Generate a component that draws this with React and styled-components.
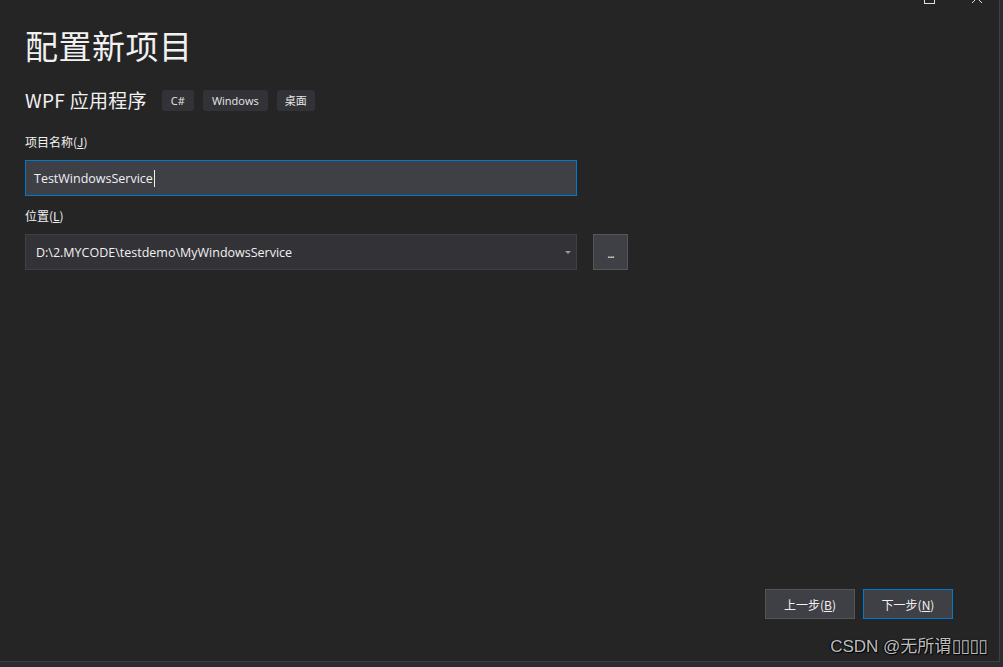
import React from 'react';
import styled, { createGlobalStyle } from 'styled-components';

const GlobalStyle = createGlobalStyle`
    html, body {
        margin: 0;
        padding: 0;
        background: #2d2d30;
    }
    body {
        font-family: "Noto Sans CJK SC", "Liberation Sans", sans-serif;
        color: #f1f1f1;
    }
`;

const Screen = styled.div`
    width: 1003px;
    height: 667px;
    overflow: hidden;
    background: #2d2d30;
`;

const Dialog = styled.div`
    position: relative;
    width: 1000px;
    height: 662px;
    box-sizing: border-box;
    background: #252526;
    border-right: 1px solid #3f3f46;
    border-bottom: 1px solid #3f3f46;
    padding: 23px 0 0 25px;
    display: flex;
    flex-direction: column;
`;

const WindowControls = styled.div`
    position: absolute;
    top: -8px;
    right: 16px;
    display: flex;
    gap: 36px;
    align-items: center;
`;

const Title = styled.h1`
    margin: 0;
    font-size: 33px;
    font-weight: 400;
    line-height: 44px;
    letter-spacing: 0.5px;
`;

const SubRow = styled.div`
    display: flex;
    align-items: center;
    margin-top: 22px;
    height: 22px;
`;

const SubTitle = styled.span`
    font-size: 19px;
    line-height: 22px;
    margin-right: 15px;
    letter-spacing: 0.3px;
`;

const Tag = styled.span`
    display: inline-flex;
    align-items: center;
    height: 21px;
    padding: 0 ${p => p.pad || 9}px;
    margin-right: 9px;
    background: #333337;
    border-radius: 3px;
    font-family: "Open Sans", "Noto Sans CJK SC", sans-serif;
    font-size: 11px;
    color: #e8e8e8;
`;

const Label = styled.div`
    margin-top: ${p => p.top}px;
    font-size: 12px;
    line-height: 16px;
    color: #f1f1f1;
    u { text-decoration: underline; }
`;

const Field = styled.div`
    margin-top: 10px;
    display: flex;
    gap: 16px;
    align-items: center;
`;

const TextInput = styled.div`
    width: 552px;
    height: 36px;
    box-sizing: border-box;
    background: #3f3f46;
    border: 1px solid #007acc;
    padding: 0 8px;
    display: flex;
    align-items: center;
    font-family: "Open Sans", sans-serif;
    font-size: 12.5px;
    color: #f1f1f1;
`;

const Caret = styled.span`
    display: inline-block;
    width: 1px;
    height: 17px;
    background: #f1f1f1;
    margin-left: 1px;
`;

const Combo = styled.div`
    width: 552px;
    height: 36px;
    box-sizing: border-box;
    background: #333337;
    border: 1px solid #3f3f46;
    padding: 0 5px 0 10px;
    display: flex;
    align-items: center;
    justify-content: space-between;
    font-family: "Open Sans", sans-serif;
    font-size: 12.5px;
    color: #f1f1f1;
`;

const Arrow = styled.span`
    width: 0;
    height: 0;
    border-left: 3px solid transparent;
    border-right: 3px solid transparent;
    border-top: 3px solid #999999;
`;

const BrowseButton = styled.div`
    width: 35px;
    height: 36px;
    box-sizing: border-box;
    background: #3f3f46;
    border: 1px solid #555558;
    display: flex;
    align-items: center;
    justify-content: center;
    padding-top: 2px;
    font-family: "Open Sans", sans-serif;
    font-size: 12px;
    color: #f1f1f1;
    letter-spacing: -1px;
`;

const Spacer = styled.div`
    flex: 1;
`;

const Footer = styled.div`
    display: flex;
    justify-content: flex-end;
    gap: 8px;
    padding-right: 46px;
    margin-bottom: 42px;
`;

const NavButton = styled.div`
    width: 90px;
    height: 30px;
    box-sizing: border-box;
    background: #3f3f46;
    border: 1px solid ${p => (p.primary ? '#007acc' : '#555558')};
    display: flex;
    align-items: center;
    justify-content: center;
    font-size: 12px;
    color: #f1f1f1;
    u { text-decoration: underline; }
`;

const Watermark = styled.div`
    position: absolute;
    right: 12px;
    bottom: 4px;
    font-family: "Liberation Sans", "Noto Sans CJK SC", sans-serif;
    font-size: 17px;
    color: #bdbdbd;
    text-shadow: 1px 1px 1px #000, -1px 0 1px #000;
    white-space: nowrap;
`;

const Tofu = styled.span`
    font-family: "DejaVu Sans", sans-serif;
    font-size: 18px;
    letter-spacing: -1px;
`;

export default function App() {
    return (
        <Screen>
            <GlobalStyle />
            <Dialog>
                <WindowControls>
                    <svg width="11" height="11" viewBox="0 0 11 11">
                        <rect x="0.5" y="0.5" width="10" height="10" fill="none" stroke="#e0e0e0" />
                    </svg>
                    <svg width="12" height="12" viewBox="0 0 12 12">
                        <path d="M1 1 L11 11 M11 1 L1 11" stroke="#e0e0e0" strokeWidth="1" />
                    </svg>
                </WindowControls>
                <Title>配置新项目</Title>
                <SubRow>
                    <SubTitle>WPF 应用程序</SubTitle>
                    <Tag pad={9}>C#</Tag>
                    <Tag pad={9}>Windows</Tag>
                    <Tag pad={8}>桌面</Tag>
                </SubRow>
                <Label top={23}>项目名称(<u>J</u>)</Label>
                <Field>
                    <TextInput>
                        TestWindowsService
                        <Caret />
                    </TextInput>
                </Field>
                <Label top={12}>位置(<u>L</u>)</Label>
                <Field>
                    <Combo>
                        D:\2.MYCODE\testdemo\MyWindowsService
                        <Arrow />
                    </Combo>
                    <BrowseButton>...</BrowseButton>
                </Field>
                <Spacer />
                <Footer>
                    <NavButton>上一步(<u>B</u>)</NavButton>
                    <NavButton primary>下一步(<u>N</u>)</NavButton>
                </Footer>
                <Watermark>
                    CSDN @无所谓<Tofu>▯▯▯▯</Tofu>
                </Watermark>
            </Dialog>
        </Screen>
    );
}
